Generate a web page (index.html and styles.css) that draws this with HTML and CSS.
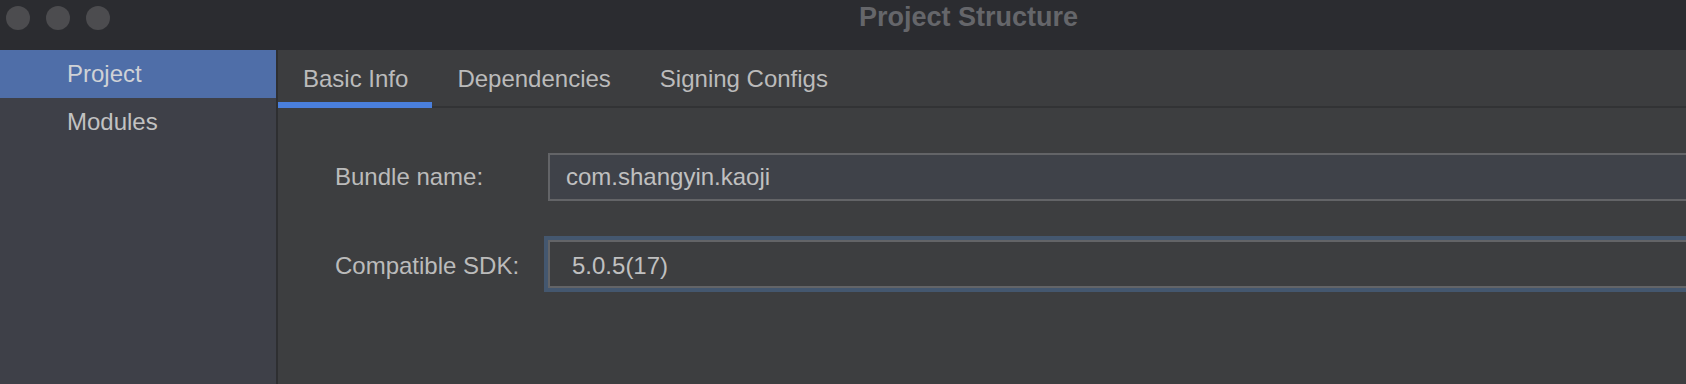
FILE: index.html
```html
<!DOCTYPE html>
<html lang="en">
<head>
<meta charset="utf-8">
<title>Project Structure</title>
<link rel="stylesheet" href="styles.css">
</head>
<body>
<div class="window">
  <header class="titlebar">
    <div class="lights">
      <span class="light"></span>
      <span class="light"></span>
      <span class="light"></span>
    </div>
    <div class="title">Project Structure</div>
  </header>
  <div class="main">
    <nav class="sidebar">
      <div class="nav-item is-selected">Project</div>
      <div class="nav-item">Modules</div>
    </nav>
    <div class="divider"></div>
    <section class="content">
      <div class="tabs">
        <div class="tab is-active">Basic Info</div>
        <div class="tab">Dependencies</div>
        <div class="tab">Signing Configs</div>
      </div>
      <div class="form">
        <div class="row">
          <label class="label">Bundle name:</label>
          <div class="field field-text">com.shangyin.kaoji</div>
        </div>
        <div class="row row-combo">
          <label class="label">Compatible SDK:</label>
          <div class="field field-combo">5.0.5(17)</div>
        </div>
      </div>
    </section>
  </div>
</div>
</body>
</html>
```
FILE: styles.css
```css
html, body {
  margin: 0;
  padding: 0;
  width: 1686px;
  height: 384px;
  overflow: hidden;
  background: #3d3e40;
}

.window {
  display: flex;
  flex-direction: column;
  width: 1686px;
  height: 384px;
  font-family: "Liberation Sans", Arial, sans-serif;
  font-size: 24px;
  color: #bbbbbb;
}

.titlebar {
  height: 50px;
  flex: none;
  background: #2b2c30;
  display: flex;
  align-items: flex-start;
}

.lights {
  display: flex;
  gap: 16px;
  padding: 6px 0 0 6px;
}

.light {
  width: 24px;
  height: 24px;
  border-radius: 50%;
  background: #4c4c4f;
}

.title {
  margin-left: 749px;
  font-size: 27px;
  font-weight: bold;
  line-height: 34px;
  color: #65666a;
  white-space: nowrap;
}

.main {
  flex: 1;
  display: flex;
  min-height: 0;
}

.sidebar {
  width: 276px;
  flex: none;
  background: #3e4048;
  display: flex;
  flex-direction: column;
}

.nav-item {
  height: 48px;
  line-height: 48px;
  padding-left: 67px;
  color: #c2c2c2;
}

.nav-item.is-selected {
  background: #4f6ea8;
  color: #d0d2d6;
}

.divider {
  width: 2px;
  flex: none;
  background: #2e2f31;
}

.content {
  flex: 1;
  min-width: 0;
  display: flex;
  flex-direction: column;
  overflow: hidden;
  background: #3d3e40;
}

.tabs {
  height: 58px;
  flex: none;
  display: flex;
  background: #3c3d3f;
  box-shadow: inset 0 -2px 0 #323335;
}

.tab {
  box-sizing: border-box;
  height: 58px;
  padding: 5px 24px 0 25px;
  line-height: 47px;
  border-bottom: 6px solid transparent;
  color: #bbbbbb;
  white-space: nowrap;
}

.tab.is-active {
  border-bottom-color: #4a7fdc;
}

.form {
  display: flex;
  flex-direction: column;
  gap: 39px;
  padding: 45px 0 0 57px;
}

.row {
  display: flex;
  align-items: center;
}

.label {
  width: 213px;
  flex: none;
  color: #bbbbbb;
  white-space: nowrap;
}

.row-combo .label {
  padding-top: 3px;
}

.field {
  flex: 1;
  box-sizing: border-box;
  height: 48px;
  line-height: 44px;
  margin-right: -60px;
  border: 2px solid #636467;
  color: #c0c0c0;
  white-space: nowrap;
}

.field-text {
  background: #3f4249;
  padding-left: 16px;
}

.field-combo {
  background: #3d3e40;
  padding: 4px 0 0 22px;
  line-height: 40px;
  box-shadow: 0 0 0 4px #44576f;
}
```
